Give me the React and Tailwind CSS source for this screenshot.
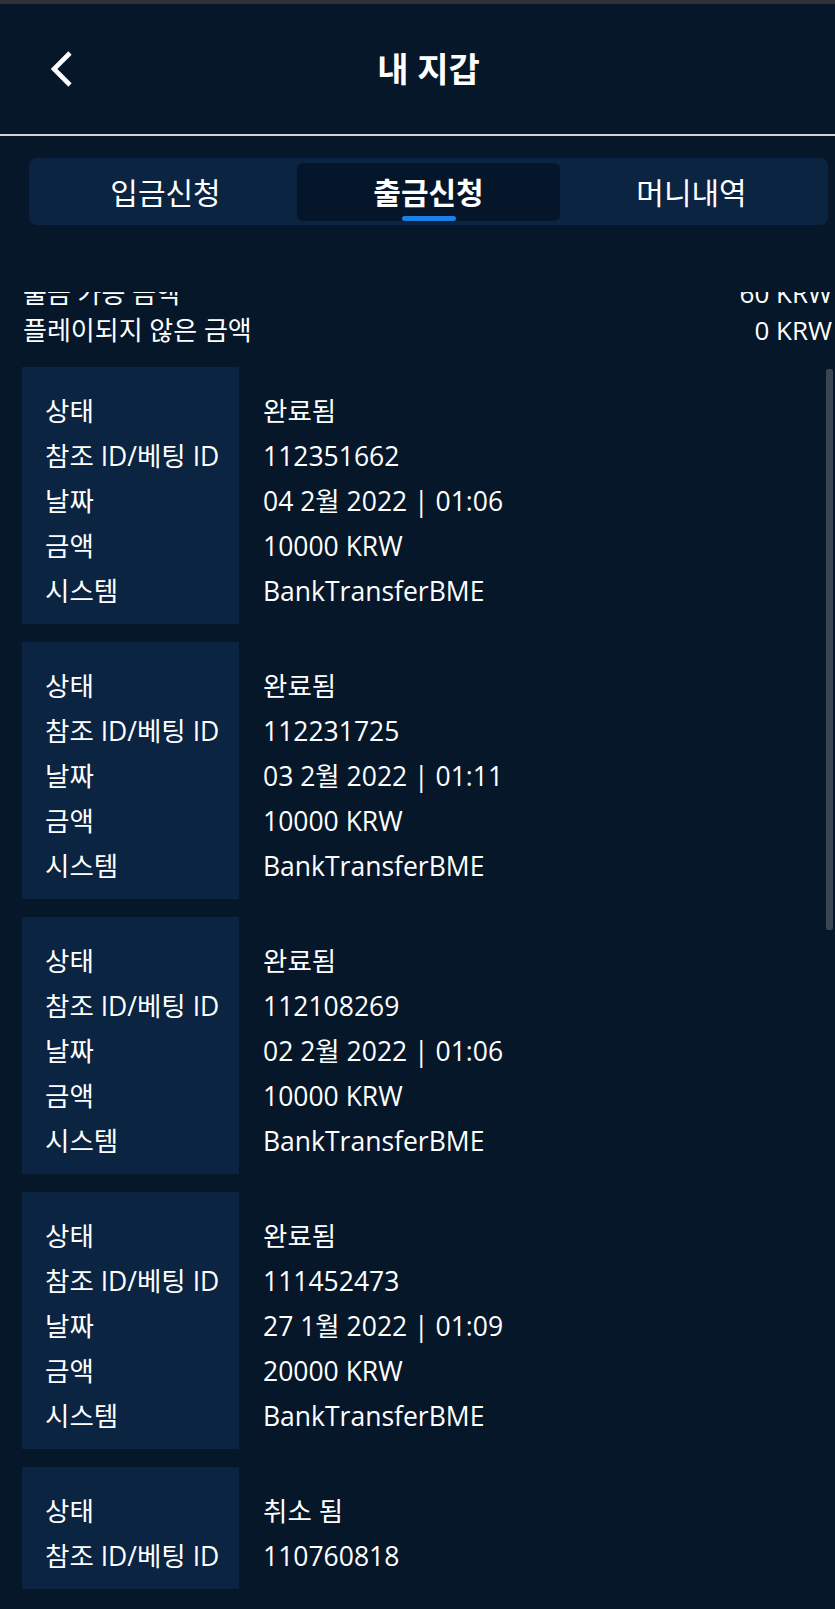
const FONT = { fontFamily: '"Open Sans", "Noto Sans CJK KR", sans-serif' };

const TABS = ['입금신청', '출금신청', '머니내역'];

// withdrawal history rows, newest first
const ENTRIES = [
  { status: '완료됨', ref: '112351662', date: '04 2월 2022 | 01:06', amount: '10000 KRW', system: 'BankTransferBME' },
  { status: '완료됨', ref: '112231725', date: '03 2월 2022 | 01:11', amount: '10000 KRW', system: 'BankTransferBME' },
  { status: '완료됨', ref: '112108269', date: '02 2월 2022 | 01:06', amount: '10000 KRW', system: 'BankTransferBME' },
  { status: '완료됨', ref: '111452473', date: '27 1월 2022 | 01:09', amount: '20000 KRW', system: 'BankTransferBME' },
  { status: '취소 됨', ref: '110760818' },
];

function EntryCard({ entry }) {
  const rows = [
    ['상태', entry.status],
    ['참조 ID/베팅 ID', entry.ref],
    ['날짜', entry.date],
    ['금액', entry.amount],
    ['시스템', entry.system],
  ].filter(([, value]) => value);

  return (
    <div className="flex text-[26.5px] leading-[45px] text-white">
      <div className="w-[217px] shrink-0 bg-[#0a2441] pb-[10px] pl-[23px] pt-[22px]">
        {rows.map(([label]) => (
          <div key={label} className="whitespace-nowrap">{label}</div>
        ))}
      </div>
      <div className="pb-[10px] pl-[24px] pt-[22px]">
        {rows.map(([label, value]) => (
          <div key={label} className="whitespace-nowrap">{value}</div>
        ))}
      </div>
    </div>
  );
}

function App() {
  const active = 1;

  return (
    <div className="h-[1609px] overflow-hidden bg-[#06172a] text-white" style={FONT}>
      <div className="h-[4px] bg-[#2e3135]" />
      <header className="relative flex h-[130px] items-center justify-center pl-[22px]">
        <svg
          className="absolute left-[49px] top-[46px]"
          width="26"
          height="38"
          viewBox="0 0 26 38"
          fill="none"
          stroke="white"
          strokeWidth="4.6"
          strokeLinejoin="miter"
        >
          <polyline points="21,3 5,19 21,35" />
        </svg>
        <h1 className="text-[34px] font-bold leading-none">내 지갑</h1>
      </header>
      <div className="h-[2px] bg-[#cfd3da]" />

      <nav className="ml-[29px] mr-[7px] mt-[22px] grid grid-cols-3 rounded-[8px] bg-[#0b2442] pb-[4px] pl-[5px] pr-[5px] pt-[5px]">
        {TABS.map((tab, i) => (
          <button
            key={tab}
            type="button"
            className={
              i === active
                ? 'relative h-[58px] rounded-[6px] bg-[#06162a] text-[30px] font-bold text-white'
                : 'relative h-[58px] rounded-[6px] text-[30px] text-white'
            }
          >
            {tab}
            {i === active && (
              <span className="absolute bottom-0 left-1/2 h-[5px] w-[54px] -translate-x-1/2 rounded-full bg-[#1b7fe3]" />
            )}
          </button>
        ))}
      </nav>

      <div className="mt-[67px] h-[60px] overflow-hidden pl-[23px] pr-[3px] text-[26px] leading-[37px]">
        <div className="-mt-[17px]">
          <div className="flex justify-between">
            <span>출금 가능 금액</span>
            <span>60 KRW</span>
          </div>
          <div className="flex justify-between">
            <span>플레이되지 않은 금액</span>
            <span>0 KRW</span>
          </div>
        </div>
      </div>

      <div className="relative mt-[15px] pl-[22px]">
        <div className="flex flex-col gap-[18px]">
          {ENTRIES.map((entry) => (
            <EntryCard key={entry.ref} entry={entry} />
          ))}
        </div>
        <div className="absolute right-[2px] top-[2px] h-[561px] w-[7px] rounded-[2px] bg-[#3a4452]" />
      </div>
    </div>
  );
}

export default App;
